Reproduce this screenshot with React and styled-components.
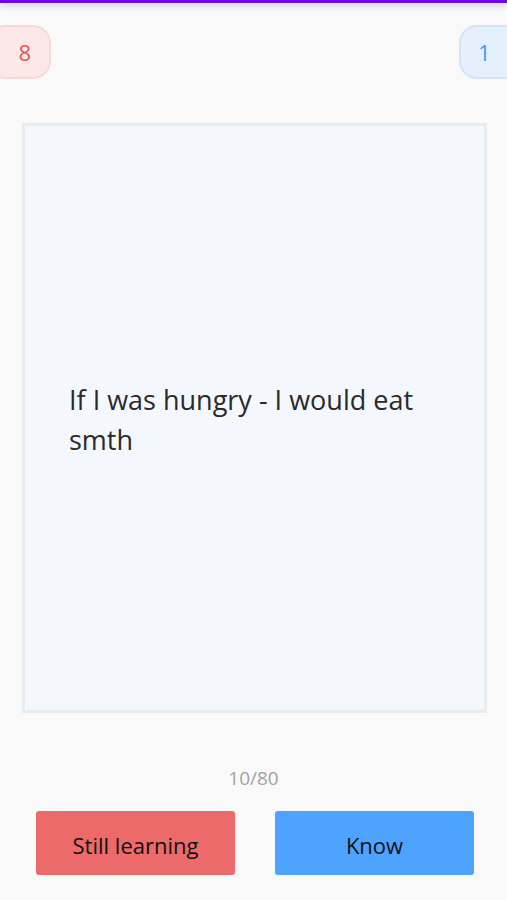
import React from "react";
import styled, { createGlobalStyle } from "styled-components";

const GlobalStyle = createGlobalStyle`
  html, body {
    margin: 0;
    padding: 0;
    background: #f9f9f9;
    font-family: "Open Sans", "Noto Sans", sans-serif;
  }
`;

const Page = styled.div`
  width: 507px;
  height: 900px;
  overflow: hidden;
  display: flex;
  flex-direction: column;
  background: #f9f9f9;
`;

const TopBar = styled.div`
  height: 3px;
  background: #6a0bef;
  box-shadow: 0 2px 6px rgba(0, 0, 0, 0.25);
`;

const Scores = styled.div`
  display: flex;
  justify-content: space-between;
  margin-top: 22px;
  height: 54px;
`;

const Badge = styled.div`
  width: 64px;
  height: 54px;
  box-sizing: border-box;
  display: flex;
  align-items: center;
  font-size: 22px;
  border-radius: 18px;
  color: ${(p) => (p.$side === "left" ? "#e55656" : "#3f9cf2")};
  background: ${(p) => (p.$side === "left" ? "#fde8e8" : "#e4f1fd")};
  border: 2px solid ${(p) => (p.$side === "left" ? "#f6dada" : "#d3e5f5")};
  margin-left: ${(p) => (p.$side === "left" ? "-13px" : "0")};
  margin-right: ${(p) => (p.$side === "left" ? "0" : "-16px")};
  justify-content: ${(p) => (p.$side === "left" ? "flex-end" : "flex-start")};
  padding: ${(p) => (p.$side === "left" ? "0 18px 0 0" : "0 0 0 17px")};
`;

const Card = styled.div`
  margin: 44px 20px 0 22px;
  height: 590px;
  box-sizing: border-box;
  background: #f4f8fe;
  border: 3px solid #e7ecef;
  display: flex;
  align-items: center;
  padding: 0 44px;
`;

const CardText = styled.p`
  margin: 0;
  margin-top: 4px;
  font-size: 27px;
  line-height: 40px;
  color: #2a2a2a;
`;

const Counter = styled.div`
  margin-top: 53px;
  text-align: center;
  font-size: 19px;
  color: #a2a2a2;
  line-height: 24px;
`;

const Actions = styled.div`
  display: flex;
  justify-content: space-between;
  padding: 0 33px 0 36px;
  margin-top: 21px;
`;

const ActionButton = styled.button`
  width: 199px;
  height: 64px;
  padding: 4px 0 0;
  border: none;
  border-radius: 3px;
  font-family: inherit;
  font-size: 22px;
  color: #111111;
  background: ${(p) => (p.$variant === "learn" ? "#ec6a6a" : "#4da3ff")};
  cursor: pointer;
`;

export default function App() {
  return (
    <Page>
      <GlobalStyle />
      <TopBar />
      <Scores>
        <Badge $side="left">8</Badge>
        <Badge $side="right">1</Badge>
      </Scores>
      <Card>
        <CardText>If I was hungry - I would eat smth</CardText>
      </Card>
      <Counter>10/80</Counter>
      <Actions>
        <ActionButton $variant="learn">Still learning</ActionButton>
        <ActionButton $variant="know">Know</ActionButton>
      </Actions>
    </Page>
  );
}
